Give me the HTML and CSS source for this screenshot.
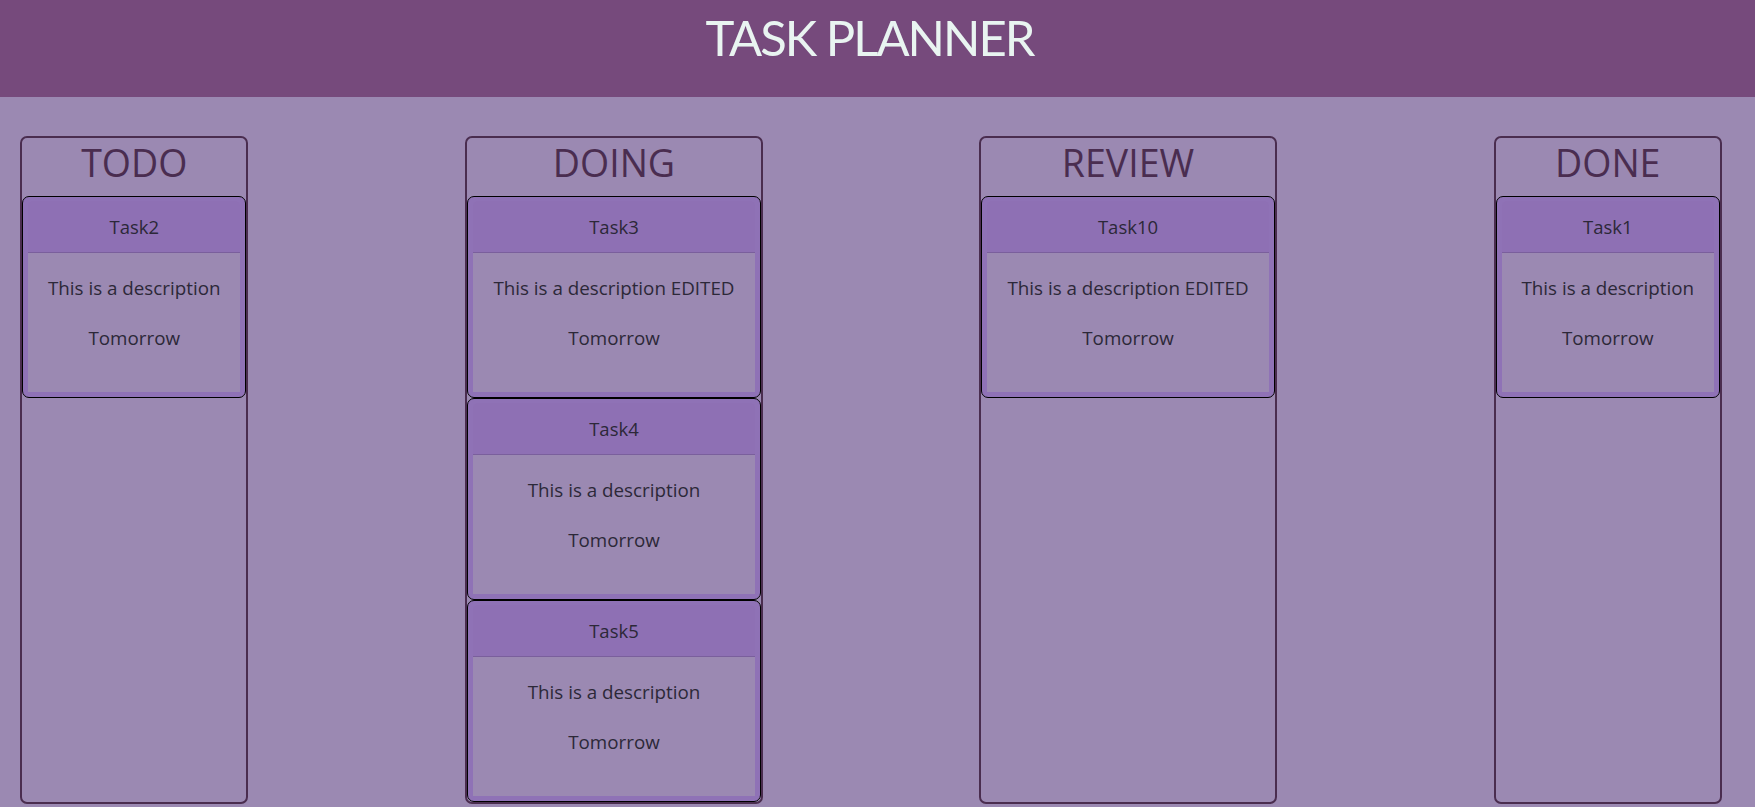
FILE: index.html
```html
<!DOCTYPE html>
<html lang="en">
<head>
<meta charset="utf-8">
<title>Task Planner</title>
<link rel="stylesheet" href="styles.css">
</head>
<body>
<header class="topbar">
  <h1 class="app-title">TASK PLANNER</h1>
</header>
<main class="board">
  <section class="column">
    <h2 class="column-title">TODO</h2>
    <div class="card">
      <div class="card-header">Task2</div>
      <div class="card-body">
        <p>This is a description</p>
        <p>Tomorrow</p>
      </div>
    </div>
  </section>
  <section class="column">
    <h2 class="column-title">DOING</h2>
    <div class="card">
      <div class="card-header">Task3</div>
      <div class="card-body">
        <p>This is a description EDITED</p>
        <p>Tomorrow</p>
      </div>
    </div>
    <div class="card">
      <div class="card-header">Task4</div>
      <div class="card-body">
        <p>This is a description</p>
        <p>Tomorrow</p>
      </div>
    </div>
    <div class="card">
      <div class="card-header">Task5</div>
      <div class="card-body">
        <p>This is a description</p>
        <p>Tomorrow</p>
      </div>
    </div>
  </section>
  <section class="column">
    <h2 class="column-title">REVIEW</h2>
    <div class="card">
      <div class="card-header">Task10</div>
      <div class="card-body">
        <p>This is a description EDITED</p>
        <p>Tomorrow</p>
      </div>
    </div>
  </section>
  <section class="column">
    <h2 class="column-title">DONE</h2>
    <div class="card">
      <div class="card-header">Task1</div>
      <div class="card-body">
        <p>This is a description</p>
        <p>Tomorrow</p>
      </div>
    </div>
  </section>
</main>
</body>
</html>
```
FILE: styles.css
```css
html, body {
  margin: 0;
  padding: 0;
}
body {
  background: #9b89b2;
  font-family: "Open Sans", "Noto Sans", sans-serif;
  color: #2c2838;
  min-height: 807px;
}
.topbar {
  background: #764a7c;
  height: 97px;
  text-align: center;
}
.app-title {
  margin: 0;
  padding-right: 16px;
  font-family: "Lato", sans-serif;
  font-weight: 400;
  font-size: 49px;
  line-height: 74px;
  color: #e9f4f1;
  letter-spacing: -2px;
}
.board {
  display: flex;
  justify-content: space-between;
  align-items: stretch;
  padding: 39px 33px 0 20px;
}
.column {
  border: 2px solid #4a2d4f;
  border-radius: 7px;
  display: flex;
  flex-direction: column;
}
.column-title {
  margin: 0;
  height: 58px;
  font-weight: 400;
  font-size: 37.5px;
  line-height: 50px;
  text-align: center;
  color: #4a2d50;
}
.card {
  border: 1px solid #000;
  border-radius: 7px;
  background: #8f72b6;
  padding: 4px 5px 5px;
  text-align: center;
}
.card-header {
  font-size: 18.5px;
  line-height: 27px;
  padding: 12px 20px 12px;
  border-bottom: 1px solid #7a5f9c;
  border-radius: 5px 5px 0 0;
  background: #8e70b4;
}
.card-body {
  background: #9b89b2;
  padding: 22px 20px 0;
  height: 117px;
  font-size: 18.8px;
  line-height: 27px;
}
.card-body p {
  margin: 0 0 23px;
  white-space: nowrap;
}
```
